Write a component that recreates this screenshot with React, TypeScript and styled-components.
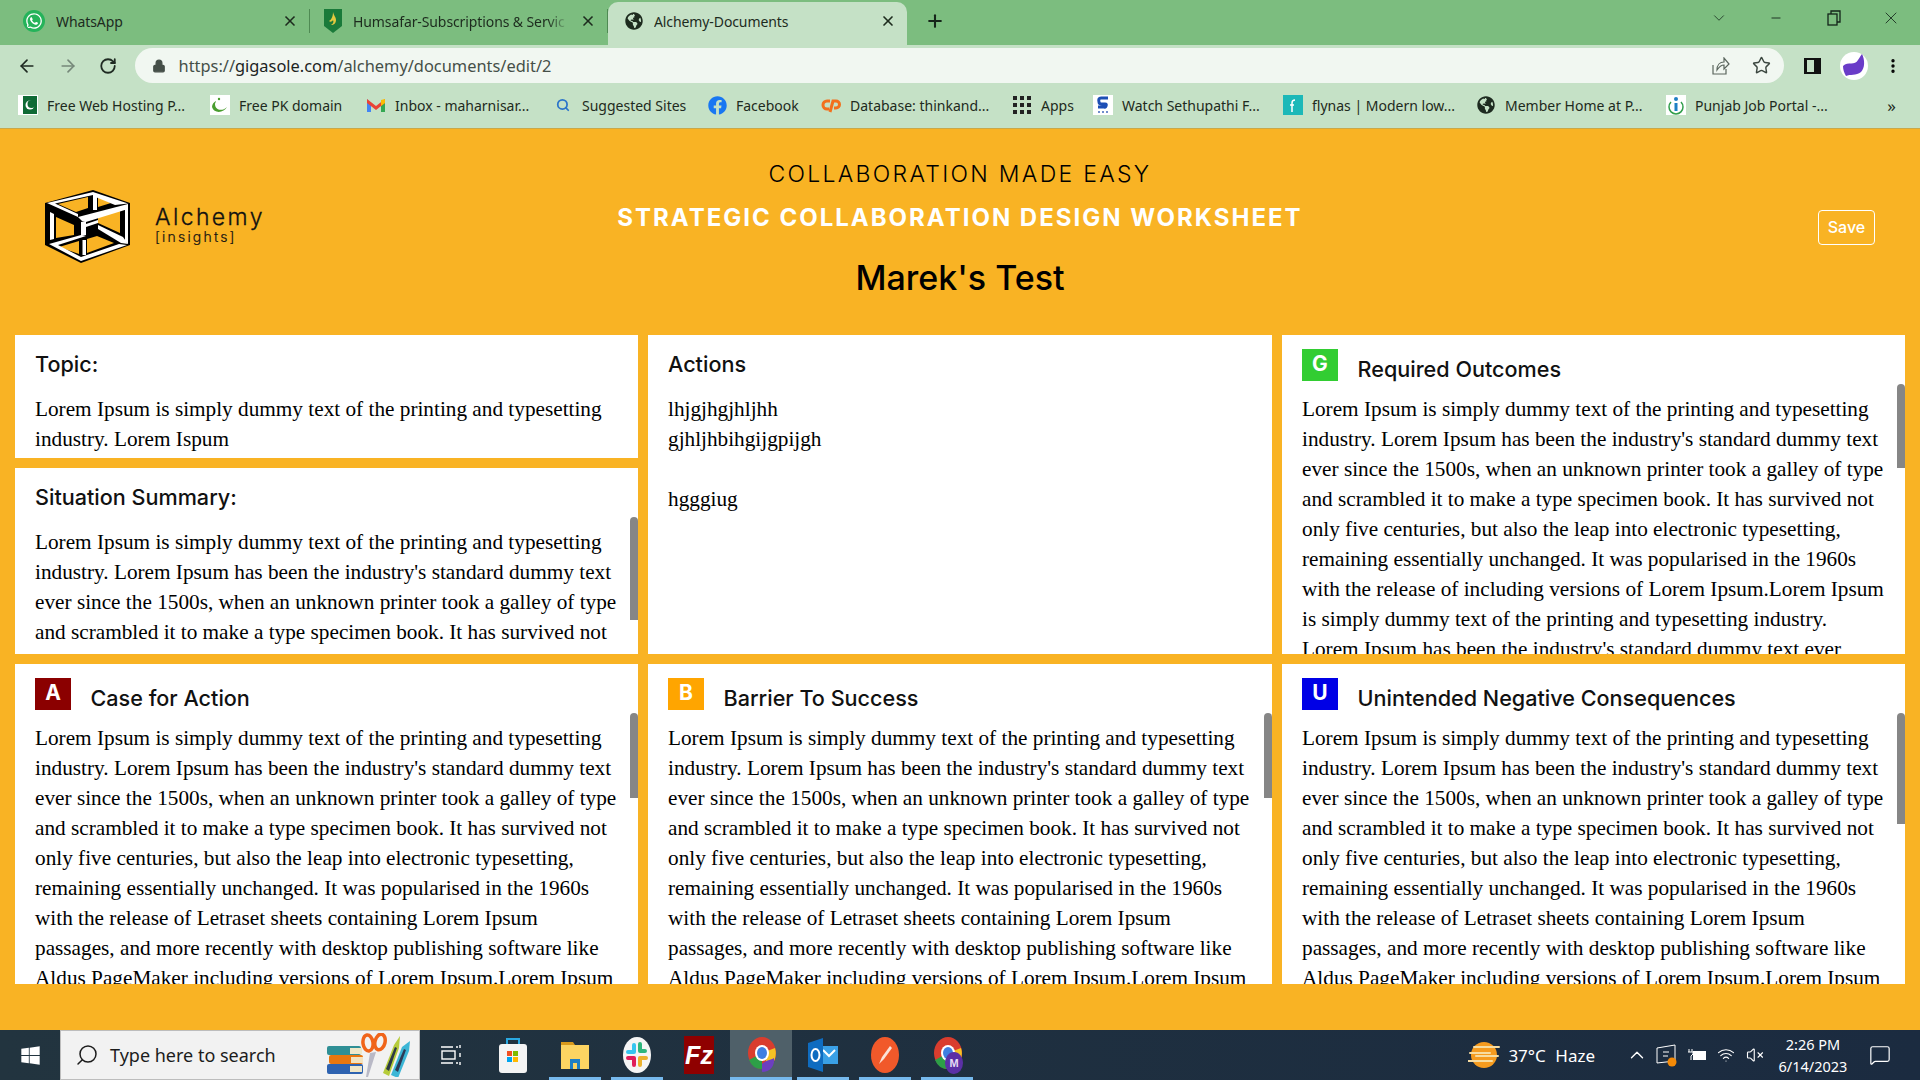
import React from "react";
import styled, { createGlobalStyle } from "styled-components";
import { FaWhatsapp, FaFacebook, FaGlobeAmericas, FaWindows } from "react-icons/fa";
import { ArrowLeft, ArrowRight, RotateCw, Lock, Plus, X, ChevronDown, ChevronUp, Search, Minus, MoreVertical, Star, Wifi, VolumeX, MessageSquare } from "lucide-react";

const GlobalStyle = createGlobalStyle`
  html, body { margin: 0; padding: 0; height: 100%; overflow: hidden; }
  #root { height: 100%; }
  * { box-sizing: border-box; }
`;

const Screen = styled.div`
  width: 1920px;
  height: 1080px;
  display: flex;
  flex-direction: column;
  background: #f9b324;
  overflow: hidden;
`;

/* browser chrome */
const TabBar = styled.div`
  height: 45px;
  background: #7cbd7f;
  display: flex;
  align-items: flex-end;
`;

const Tab = styled.div<{ $w: number; $pad: number; $active?: boolean }>`
  width: ${(p) => p.$w}px;
  padding: 0 11px 0 ${(p) => p.$pad}px;
  display: flex;
  align-items: center;
  gap: 11px;
  font: 14px "Noto Sans", sans-serif;
  letter-spacing: -0.1px;
  color: #1d2b1e;
  white-space: nowrap;
  ${(p) =>
    p.$active
      ? `height: 43px; padding-bottom: 5px; border-radius: 10px 10px 0 0; background: #c5e1c6;`
      : `height: 24px; margin-bottom: 12px; border-right: 1px solid #4f8a53;`}
`;

const TabTitle = styled.span<{ $fade?: boolean }>`
  flex: 1;
  overflow: hidden;
  white-space: nowrap;
  ${(p) => p.$fade && `mask-image: linear-gradient(90deg, #000 90%, transparent);`}
`;

const WhatsappMark = styled(FaWhatsapp)`
  flex: none;
  background: #25b35a;
  border-radius: 50%;
  color: #fff;
  padding: 2px;
`;

const NewTab = styled.div`
  width: 56px;
  height: 43px;
  display: flex;
  align-items: center;
  justify-content: center;
  padding-bottom: 5px;
  color: #16261a;
`;

const WindowControls = styled.div`
  margin-left: auto;
  height: 45px;
  display: flex;
  align-items: flex-start;
  padding-top: 8px;
  color: #13241a;
`;

const WinButton = styled.div`
  width: 57.5px;
  height: 20px;
  display: flex;
  align-items: center;
  justify-content: center;
`;

const Toolbar = styled.div`
  height: 41px;
  background: #c5e1c6;
  display: flex;
  align-items: center;
  padding: 0 0 0 7px;
`;

const NavButton = styled.div<{ $dim?: boolean }>`
  width: 40.5px;
  display: flex;
  justify-content: center;
  color: ${(p) => (p.$dim ? "#76887a" : "#1f2a22")};
`;

const Omnibox = styled.div`
  width: 1649px;
  margin-left: 6px;
  height: 35px;
  border-radius: 18px;
  background: #f1f7f1;
  display: flex;
  align-items: center;
  padding: 0 0 0 17px;
  color: #454f48;
  font: 16.4px "Noto Sans", sans-serif;
  gap: 13px;
`;

const OmniIcons = styled.div`
  margin-left: auto;
  display: flex;
  align-items: center;
  gap: 22px;
  padding-right: 13px;
  color: #3c4740;
`;

const ToolIcons = styled.div`
  display: flex;
  align-items: center;
  padding-left: 20px;
`;

const AvatarSlot = styled.span`
  display: flex;
  margin: 0 16px 0 18px;
`;

const Dark = styled.span`
  color: #1c241e;
`;

const Bookmarks = styled.div`
  height: 43px;
  background: #c5e1c6;
  border-bottom: 1px solid #c9a84a;
  display: flex;
  align-items: center;
  padding: 0 0 4px 18px;
  font: 14px "Noto Sans", sans-serif;
  color: #1e2a20;
`;

const Bookmark = styled.div<{ $w: number }>`
  width: ${(p) => p.$w}px;
  display: flex;
  align-items: center;
  gap: 9px;
  white-space: nowrap;
`;

const Fav = styled.span`
  width: 20px;
  height: 20px;
  flex: none;
  display: flex;
  align-items: center;
  justify-content: center;
  color: #1e2a20;
`;

const More = styled.div`
  margin-left: auto;
  padding-right: 24px;
  font-size: 17px;
`;

/* page */
const Header = styled.header`
  height: 206px;
  display: grid;
  grid-template-columns: 1fr auto 1fr;
  padding: 0 45px;
`;

const Logo = styled.div`
  display: flex;
  align-items: flex-start;
  gap: 25px;
  padding-top: 61px;
`;

const LogoText = styled.div`
  display: flex;
  flex-direction: column;
  font-family: "Inter", sans-serif;
  color: #111;
  padding-top: 14px;
`;

const LogoName = styled.span`
  font-size: 23px;
  font-weight: 300;
  line-height: 26px;
  letter-spacing: 2.4px;
  -webkit-text-stroke: 0.3px #111;
`;

const LogoSub = styled.span`
  font-size: 14px;
  font-weight: 300;
  line-height: 13px;
  letter-spacing: 2.2px;
  -webkit-text-stroke: 0.2px #111;
`;

const Titles = styled.div`
  display: flex;
  flex-direction: column;
  align-items: center;
  padding-top: 31px;
  font-family: "Inter", sans-serif;
`;

const Tagline = styled.div`
  font-size: 23px;
  font-weight: 300;
  line-height: 28px;
  letter-spacing: 2.3px;
  color: #000;
`;

const Worksheet = styled.div`
  margin-top: 15px;
  font-size: 24px;
  font-weight: 700;
  line-height: 29px;
  letter-spacing: 2px;
  color: #fff;
`;

const DocName = styled.h1`
  margin: 24px 0 0;
  font-size: 34px;
  font-weight: 500;
  line-height: 44px;
  color: #000;
`;

const SaveRow = styled.div`
  display: flex;
  justify-content: flex-end;
  align-items: flex-start;
  padding-top: 81px;
`;

const SaveButton = styled.button`
  width: 57px;
  height: 35px;
  border: 1px solid #fff;
  border-radius: 4px;
  background: transparent;
  color: #fff;
  font: 500 16px "Inter", sans-serif;
  padding: 0 0 2px;
`;

const Board = styled.main`
  display: grid;
  grid-template-columns: 623px 624px 623px;
  grid-template-rows: 319px 320px;
  column-gap: 10px;
  row-gap: 10px;
  padding: 0 15px;
`;

const Stack = styled.div`
  display: flex;
  flex-direction: column;
  gap: 10px;
  min-height: 0;
`;

const Card = styled.section<{ $h?: number }>`
  position: relative;
  background: #fff;
  padding: 14px 20px 0;
  overflow: hidden;
  ${(p) => (p.$h ? `height: ${p.$h}px; flex: none;` : "")}
`;

const CardHead = styled.div`
  height: 32px;
  margin-bottom: 13px;
  display: flex;
  align-items: flex-start;
  gap: 19.5px;
`;

const Badge = styled.span<{ $bg: string }>`
  width: 36px;
  height: 32px;
  background: ${(p) => p.$bg};
  color: #fff;
  font: 700 21px/30px "Inter", sans-serif;
  text-align: center;
`;

const CardTitle = styled.h2<{ $badged?: boolean }>`
  margin: ${(p) => (p.$badged ? "8px" : "3px")} 0 0;
  font: 500 21.6px/24px "Inter", sans-serif;
  color: #111;
`;

const Body = styled.div`
  font: 21.25px/30px "Liberation Serif", serif;
  color: #000;
  white-space: pre-line;
`;

const Thumb = styled.div<{ $top: number; $h: number }>`
  position: absolute;
  right: 0;
  top: ${(p) => p.$top}px;
  width: 8px;
  height: ${(p) => p.$h}px;
  background: #868686;
  border-radius: 4px 4px 0 0;
`;

/* taskbar */
const Taskbar = styled.footer`
  margin-top: auto;
  height: 50px;
  background: linear-gradient(90deg, #22343f, #1b2b40);
  display: flex;
  align-items: stretch;
  color: #fff;
`;

const StartButton = styled.div`
  width: 60px;
  display: flex;
  align-items: center;
  justify-content: center;
  font-size: 21px;
`;

const SearchBox = styled.div`
  width: 360px;
  background: #f2f2f2;
  border: 1px solid #bdbdbd;
  display: flex;
  align-items: center;
  padding-left: 14px;
  gap: 11px;
  color: #1c1c1c;
  font: 18px "Noto Sans", sans-serif;
`;

const SearchGlass = styled(Search)`
  transform: scaleX(-1);
`;

const Doodle = styled.span`
  margin-left: auto;
  margin-right: 9px;
  display: flex;
`;

const TaskView = styled.div`
  width: 62px;
  display: flex;
  align-items: center;
  justify-content: center;
`;

const Slot = styled.div<{ $open?: boolean; $active?: boolean }>`
  position: relative;
  width: 62px;
  display: flex;
  align-items: center;
  justify-content: center;
  background: ${(p) => (p.$active ? "#4f6069" : "transparent")};
  ${(p) =>
    p.$open &&
    `&::after {
      content: "";
      position: absolute;
      bottom: 0;
      height: 3px;
      left: ${p.$active ? 0 : 5}px;
      right: ${p.$active ? 0 : 5}px;
      background: #76b9ed;
    }`}
`;

const FzTile = styled.span`
  width: 30px;
  height: 38px;
  display: flex;
  align-items: center;
  justify-content: center;
  background: #8f0000;
  color: #fff;
  font: italic bold 25px "Liberation Sans", sans-serif;
`;

const Tray = styled.div`
  margin-left: auto;
  display: flex;
  align-items: center;
  padding-right: 17px;
  font: 17px "Noto Sans", sans-serif;
`;

const Weather = styled.div`
  display: flex;
  align-items: center;
  gap: 8px;
  margin-right: 28px;
  white-space: nowrap;
  word-spacing: 5px;
`;

const TrayIcon = styled.div<{ $w: number }>`
  width: ${(p) => p.$w}px;
  display: flex;
  justify-content: center;
`;

const Clock = styled.div`
  width: 88px;
  text-align: center;
  font-size: 14.5px;
  line-height: 22px;
`;

const Notify = styled.div`
  width: 46px;
  display: flex;
  justify-content: center;
`;

const CubeLogo = () => (
  <svg width="85" height="73" viewBox="0 0 85 73">
    <polygon points="48,0 85,13 85,55 36,73 0,55 0,13" fill="#000" />
    <g fill="#f9b324">
      <polygon points="13,14 43,7 43,18 31,22" />
      <polygon points="53,7 66,13 53,17" />
      <polygon points="11,27 29,35 29,45 11,48" />
      <polygon points="53,25 75,19 75,43 53,33" />
      <polygon points="14,57 34,51 34,64" />
      <polygon points="42,49 52,46 69,53 42,63" />
    </g>
    <g fill="#fff">
      <polygon points="2,13 48,2 48,5 10,13.5 33,24 33,27" />
      <polygon points="48,2 83,13.5 70,15 48,6" />
      <polygon points="83,14 83,19 41,32 37,31 33,27" />
      <rect x="48" y="6" width="4" height="14" />
      <polygon points="80,18 83,17 83,54 80,51" />
      <polygon points="5,22 9,24 9,49 5,50" />
      <polygon points="36,32 41,31 41,34 53,30 53,33 41,37 41,45 36,46" />
      <polygon points="53,35 78,47 83,54 76,53 53,39" />
      <polygon points="4,54 36,45 41,46 13,55 36,67 74,54 82,55 36,71" />
      <rect x="37.5" y="50" width="3.5" height="15" />
    </g>
  </svg>
);

const BooksDoodle = () => (
  <svg width="84" height="44" viewBox="0 0 84 44">
    <rect x="1" y="13" width="34" height="9" rx="2" fill="#2f8f95" />
    <rect x="24" y="15" width="12" height="6" fill="#eee8c9" />
    <rect x="3" y="22" width="34" height="9" rx="2" fill="#e8770f" />
    <rect x="25" y="24" width="12" height="6" fill="#f3e3bf" />
    <rect x="1" y="31" width="36" height="10" rx="2" fill="#2d62b0" />
    <rect x="24" y="33" width="12" height="6" fill="#efe6c8" />
    <g fill="none" stroke="#f0641a" strokeWidth="3.5">
      <ellipse cx="42" cy="10" rx="5" ry="8" transform="rotate(-8 42 10)" />
      <ellipse cx="54" cy="9" rx="5" ry="8" transform="rotate(14 54 9)" />
    </g>
    <polygon points="44,20 50,19 42,44 40,44" fill="#b9b9c6" />
    <polygon points="57,40 68,12 74,3 73,15 63,43" fill="#b6cc3a" />
    <polygon points="60,36 69,14 71,15 63,38" fill="#2d3a45" />
    <polygon points="65,42 76,14 84,8 83,18 72,45" fill="#3cb6d6" />
    <polygon points="69,37 78,16 80,17 72,39" fill="#2d3a55" />
  </svg>
);

const ShieldIcon = () => (
  <svg width="18" height="24" viewBox="0 0 18 24">
    <path d="M0 0h18v17l-9 7-9-7z" fill="#1a7a3a" />
    <path d="M9 3c1 4 3 5 3 8s-2 5-5 5c2-1 3-3 2-5-1 2-3 2-4 1 2-1 4-4 4-9z" fill="#e3c93f" />
  </svg>
);

const FlagFav = () => (
  <svg width="20" height="20" viewBox="0 0 20 20">
    <rect width="20" height="20" fill="#fff" />
    <rect x="5" y="1" width="14" height="18" fill="#0f6a35" />
    <circle cx="12" cy="10" r="4.5" fill="#fff" />
    <circle cx="13.5" cy="9" r="4" fill="#0f6a35" />
  </svg>
);

const CrescentFav = () => (
  <svg width="20" height="20" viewBox="0 0 20 20">
    <rect width="20" height="20" fill="#fff" />
    <path d="M5 9c0 6 7 8 12 3-3 6-13 7-15 0 0-3 2-5 4-6 0 1-1 2-1 3z" fill="#4a9d2f" />
    <circle cx="9" cy="4" r="1.2" fill="#4a9d2f" />
  </svg>
);

const GmailFav = () => (
  <svg width="20" height="20" viewBox="0 0 20 20">
    <path d="M1 4v13h4V9z" fill="#4285f4" />
    <path d="M19 4v13h-4V9z" fill="#34a853" />
    <path d="M1 4l9 7 9-7v4l-9 7-9-7z" fill="#ea4335" />
    <path d="M15 5l4-1v4l-4 3z" fill="#fbbc04" />
  </svg>
);

const CpanelFav = () => (
  <svg width="20" height="20" viewBox="0 0 20 20" fill="none" stroke="#f2701d" strokeWidth="3">
    <path d="M9 6H6a4 4 0 0 0 0 8h2" />
    <path d="M9 17l3-11h3a3.500 3.500 0 0 1 0 7h-2" />
  </svg>
);

const SFav = () => (
  <svg width="20" height="20" viewBox="0 0 20 20">
    <rect width="20" height="20" fill="#fff" />
    <path d="M15 3H8Q5 3 6 7q0 2 3 2h3q2 0 1 2t-2 1H5" fill="none" stroke="#1d4fb5" strokeWidth="3" />
    <path d="M5 17h2M9 17h2M13 17h2" stroke="#6f8ccc" strokeWidth="2" />
  </svg>
);

const FlynasFav = () => (
  <svg width="20" height="20" viewBox="0 0 20 20">
    <rect width="20" height="20" fill="#1cb8b8" />
    <path d="M9 17V8q0-3 3-3M7 10h4" stroke="#fff" fill="none" strokeWidth="1.5" />
  </svg>
);

const PortalFav = () => (
  <svg width="20" height="20" viewBox="0 0 20 20">
    <rect width="20" height="20" fill="#fff" />
    <circle cx="10" cy="4" r="2" fill="#1f7fc4" />
    <rect x="8.500" y="8" width="3" height="8" fill="#1f7fc4" />
    <path d="M5 7a7 7 0 1 0 10 0" fill="none" stroke="#2f9d4a" strokeWidth="1.5" />
  </svg>
);

const StoreIcon = () => (
  <svg width="30" height="38" viewBox="0 0 30 38">
    <path d="M9 8V3h12v5" fill="none" stroke="#29a8e0" strokeWidth="2" />
    <rect x="1" y="8" width="28" height="29" rx="3" fill="#f4f4f4" />
    <rect x="9" y="15" width="5" height="5" fill="#f25022" />
    <rect x="15" y="15" width="5" height="5" fill="#7fba00" />
    <rect x="9" y="21" width="5" height="5" fill="#00a4ef" />
    <rect x="15" y="21" width="5" height="5" fill="#ffb900" />
  </svg>
);

const FolderIcon = () => (
  <svg width="28" height="30" viewBox="0 0 28 30">
    <path d="M0 2h12l2 3h-14z" fill="#d99a1c" />
    <rect y="5" width="28" height="24" fill="#fcd462" />
    <path d="M9 29v-10h10v10h-3v-6h-4v6z" fill="#1f7fc4" />
  </svg>
);

const SlackIcon = () => (
  <svg width="30" height="36" viewBox="0 0 30 36">
    <ellipse cx="15" cy="18" rx="14" ry="18" fill="#f5f5f5" />
    <g strokeWidth="4" strokeLinecap="round">
      <path d="M12 8v7M6 15h5" stroke="#36c5f0" />
      <path d="M23 14h-5M18 7v7" stroke="#2eb67d" />
      <path d="M18 28v-7M24 21h-6" stroke="#ecb22e" />
      <path d="M6 21h6M12 21v7" stroke="#e01e5a" />
    </g>
  </svg>
);

const ChromeIcon = ({ badge }: { badge?: string }) => (
  <svg width="32" height="38" viewBox="-2 0 32 38">
    <ellipse cx="15" cy="17" rx="14" ry="16" fill="#d93d2e" />
    <path d="M15 17L2 24a14 16 0 0 0 13 9z" fill="#2d9f47" />
    <path d="M15 17l13-5a14 16 0 0 1-6 19z" fill="#f6c324" />
    <ellipse cx="15" cy="17" rx="7" ry="8" fill="#fff" />
    <ellipse cx="15" cy="17" rx="5" ry="6" fill="#3f7fe0" />
    {badge ? (
      <>
        <ellipse cx="21" cy="27" rx="9" ry="11" fill="#5b30a6" />
        <text x="21" y="31" fontSize="11" fontFamily="Liberation Sans" fill="#e5dcf5" textAnchor="middle" fontWeight="bold">
          {badge}
        </text>
      </>
    ) : (
      <path d="M15 36c8 0 13-6 12-14-3 2-8 2-12 6z" fill="#6d3fc0" />
    )}
  </svg>
);

const OutlookIcon = () => (
  <svg width="30" height="34" viewBox="0 0 30 34">
    <rect x="11" y="8" width="19" height="18" fill="#3aa0e6" />
    <path d="M15 12l6 6 6-6" fill="none" stroke="#fff" strokeWidth="2" />
    <polygon points="0,5 15,0 15,34 0,29" fill="#0f6cc0" />
    <ellipse cx="7.500" cy="17" rx="4" ry="6" fill="none" stroke="#fff" strokeWidth="2" />
  </svg>
);

const PenIcon = () => (
  <svg width="28" height="36" viewBox="0 0 28 36">
    <ellipse cx="14" cy="18" rx="14" ry="18" fill="#f1592a" />
    <path d="M8 27l3-7 8-11 2 2-8 11z" fill="#fbe3d8" />
  </svg>
);

const TaskViewIcon = () => (
  <svg width="20" height="22" viewBox="0 0 20 22" fill="none" stroke="#fff" strokeWidth="1.4">
    <path d="M0 3h12M0 19h12M15 3h2M15 19h2M19 1v3M19 9v4M19 18v3" />
    <rect x="1" y="7" width="13" height="8" />
  </svg>
);

const SunHaze = () => (
  <svg width="32" height="28" viewBox="0 0 32 28">
    <circle cx="16" cy="14" r="13" fill="#f59b1f" />
    <path d="M6 6h25M2 12h20M8 15h22M0 20h24" stroke="#f7dca0" strokeWidth="2" strokeLinecap="round" />
  </svg>
);

const ShareIcon = () => (
  <svg width="18" height="18" viewBox="0 0 18 18" fill="none" stroke="#5a655d" strokeWidth="1.2">
    <path d="M1 8v9h13v-5" />
    <path d="M5 13c0-5 3-8 7-8V1l5 6-5 5V8c-3 0-5 2-7 5z" />
  </svg>
);

const SidePanel = () => (
  <svg width="18" height="18" viewBox="0 0 18 18">
    <rect x="0" y="1" width="17" height="16" fill="#111" />
    <rect x="3" y="3" width="7" height="12" fill="#c5e1c6" />
  </svg>
);

const Avatar = () => (
  <svg width="28" height="28" viewBox="0 0 28 28">
    <circle cx="14" cy="14" r="14" fill="#fff" />
    <path d="M3 14c5-5 12 0 15-6 2-3 3-5 4-6 3 6 3 14-1 18-5 4-11 2-15 4-2-3-3-7-3-10z" fill="#6a3cc8" />
  </svg>
);

const AppsGrid = () => (
  <svg width="18" height="18" viewBox="0 0 18 18" fill="#222">
    {[0, 7, 14].map((y) => [0, 7, 14].map((x) => <rect key={`${x}${y}`} x={x} y={y} width="4" height="4" />))}
  </svg>
);

const RestoreIcon = () => (
  <svg width="14" height="16" viewBox="0 0 14 16" fill="none" stroke="#13241a" strokeWidth="1.3">
    <rect x="1" y="4" width="9" height="11" />
    <path d="M4 4V1h9v11h-3" />
  </svg>
);

const BatteryIcon = () => (
  <svg width="21" height="14" viewBox="0 0 21 14">
    <path d="M3 1v3M6 1v3M2 4h5v2l-2 2v4" stroke="#fff" fill="none" />
    <rect x="7" y="3" width="13" height="9" fill="#fff" />
  </svg>
);

const MeetIcon = () => (
  <svg width="21" height="24" viewBox="0 0 21 24" fill="none" stroke="#fff">
    <path d="M1 5l18-3v16l-18 2z" />
    <path d="M7 9h6M7 13h5" />
    <circle cx="16" cy="19" r="4.500" fill="#f58a07" stroke="none" />
  </svg>
);

const LOREM_START = "Lorem Ipsum is simply dummy text of the printing and typesetting industry. ";
const LOREM_HISTORY =
  "Lorem Ipsum has been the industry's standard dummy text ever since the 1500s, when an unknown printer took a galley of type and scrambled it to make a type specimen book. It has survived not only five centuries, but also the leap into electronic typesetting, remaining essentially unchanged. It was popularised in the 1960s with the release of ";
const LOREM_LONG =
  LOREM_START +
  LOREM_HISTORY +
  "Letraset sheets containing Lorem Ipsum passages, and more recently with desktop publishing software like Aldus PageMaker including versions of Lorem Ipsum.Lorem Ipsum";
const LOREM_OUTCOMES =
  LOREM_START +
  LOREM_HISTORY +
  "including versions of Lorem Ipsum.Lorem Ipsum is simply dummy text of the printing and typesetting industry. Lorem Ipsum has been the industry's standard dummy text ever";

const bookmarks = [
  { w: 192, label: "Free Web Hosting P...", icon: <FlagFav /> },
  { w: 156, label: "Free PK domain", icon: <CrescentFav /> },
  { w: 187, label: "Inbox - maharnisar...", icon: <GmailFav /> },
  { w: 154, label: "Suggested Sites", icon: <Search size={14} strokeWidth={3} color="#2b74c9" /> },
  { w: 114, label: "Facebook", icon: <FaFacebook size={19} color="#1877f2" /> },
  { w: 191, label: "Database: thinkand...", icon: <CpanelFav /> },
  { w: 81, label: "Apps", icon: <AppsGrid /> },
  { w: 190, label: "Watch Sethupathi F...", icon: <SFav /> },
  { w: 193, label: "flynas | Modern low...", icon: <FlynasFav /> },
  { w: 190, label: "Member Home at P...", icon: <FaGlobeAmericas size={18} /> },
  { w: 200, label: "Punjab Job Portal -...", icon: <PortalFav /> },
];

export default function App() {
  return (
    <Screen>
      <GlobalStyle />
      <TabBar>
        <Tab $w={310} $pad={23}>
          <WhatsappMark size={22} />
          <TabTitle>WhatsApp</TabTitle>
          <X size={16} strokeWidth={2.5} />
        </Tab>
        <Tab $w={298} $pad={14}>
          <ShieldIcon />
          <TabTitle $fade>Humsafar-Subscriptions &amp; Servic</TabTitle>
          <X size={16} strokeWidth={2.5} />
        </Tab>
        <Tab $w={299} $pad={17} $active>
          <FaGlobeAmericas size={18} />
          <TabTitle>Alchemy-Documents</TabTitle>
          <X size={16} strokeWidth={2.5} />
        </Tab>
        <NewTab>
          <Plus size={20} strokeWidth={2.5} />
        </NewTab>
        <WindowControls>
          <WinButton>
            <ChevronDown size={18} strokeWidth={1} />
          </WinButton>
          <WinButton>
            <Minus size={14} strokeWidth={1.5} />
          </WinButton>
          <WinButton>
            <RestoreIcon />
          </WinButton>
          <WinButton>
            <X size={20} strokeWidth={1} />
          </WinButton>
        </WindowControls>
      </TabBar>
      <Toolbar>
        <NavButton>
          <ArrowLeft size={20} />
        </NavButton>
        <NavButton $dim>
          <ArrowRight size={20} />
        </NavButton>
        <NavButton>
          <RotateCw size={18} strokeWidth={2.4} />
        </NavButton>
        <Omnibox>
          <Lock size={14} fill="#454f48" />
          <span>
            https://<Dark>gigasole.com</Dark>/alchemy/documents/edit/2
          </span>
          <OmniIcons>
            <ShareIcon />
            <Star size={19} strokeWidth={1.8} />
          </OmniIcons>
        </Omnibox>
        <ToolIcons>
          <SidePanel />
          <AvatarSlot>
            <Avatar />
          </AvatarSlot>
          <MoreVertical size={18} strokeWidth={2.5} />
        </ToolIcons>
      </Toolbar>
      <Bookmarks>
        {bookmarks.map((b) => (
          <Bookmark key={b.label} $w={b.w}>
            <Fav>{b.icon}</Fav>
            {b.label}
          </Bookmark>
        ))}
        <More>»</More>
      </Bookmarks>

      <Header>
        <Logo>
          <CubeLogo />
          <LogoText>
            <LogoName>Alchemy</LogoName>
            <LogoSub>[insights]</LogoSub>
          </LogoText>
        </Logo>
        <Titles>
          <Tagline>COLLABORATION MADE EASY</Tagline>
          <Worksheet>STRATEGIC COLLABORATION DESIGN WORKSHEET</Worksheet>
          <DocName>Marek's Test</DocName>
        </Titles>
        <SaveRow>
          <SaveButton>Save</SaveButton>
        </SaveRow>
      </Header>

      <Board>
        <Stack>
          <Card $h={123}>
            <CardHead>
              <CardTitle>Topic:</CardTitle>
            </CardHead>
            <Body>Lorem Ipsum is simply dummy text of the printing and typesetting industry. Lorem Ispum</Body>
          </Card>
          <Card $h={186}>
            <CardHead>
              <CardTitle>Situation Summary:</CardTitle>
            </CardHead>
            <Body>{LOREM_LONG}</Body>
            <Thumb $top={49} $h={103} />
          </Card>
        </Stack>
        <Card>
          <CardHead>
            <CardTitle>Actions</CardTitle>
          </CardHead>
          <Body>{"lhjgjhgjhljhh\ngjhljhbihgijgpijgh\n\nhgggiug"}</Body>
        </Card>
        <Card>
          <CardHead>
            <Badge $bg="#32cd32">G</Badge>
            <CardTitle $badged>Required Outcomes</CardTitle>
          </CardHead>
          <Body>{LOREM_OUTCOMES}</Body>
          <Thumb $top={49} $h={84} />
        </Card>
        <Card>
          <CardHead>
            <Badge $bg="#8b0000">A</Badge>
            <CardTitle $badged>Case for Action</CardTitle>
          </CardHead>
          <Body>{LOREM_LONG}</Body>
          <Thumb $top={49} $h={85} />
        </Card>
        <Card>
          <CardHead>
            <Badge $bg="#ffa500">B</Badge>
            <CardTitle $badged>Barrier To Success</CardTitle>
          </CardHead>
          <Body>{LOREM_LONG}</Body>
          <Thumb $top={49} $h={85} />
        </Card>
        <Card>
          <CardHead>
            <Badge $bg="#0000e6">U</Badge>
            <CardTitle $badged>Unintended Negative Consequences</CardTitle>
          </CardHead>
          <Body>{LOREM_LONG}</Body>
          <Thumb $top={49} $h={111} />
        </Card>
      </Board>

      <Taskbar>
        <StartButton>
          <FaWindows />
        </StartButton>
        <SearchBox>
          <SearchGlass size={24} strokeWidth={1.5} />
          Type here to search
          <Doodle>
            <BooksDoodle />
          </Doodle>
        </SearchBox>
        <TaskView>
          <TaskViewIcon />
        </TaskView>
        <Slot>
          <StoreIcon />
        </Slot>
        <Slot $open>
          <FolderIcon />
        </Slot>
        <Slot $open>
          <SlackIcon />
        </Slot>
        <Slot>
          <FzTile>Fz</FzTile>
        </Slot>
        <Slot $open $active>
          <ChromeIcon />
        </Slot>
        <Slot $open>
          <OutlookIcon />
        </Slot>
        <Slot $open>
          <PenIcon />
        </Slot>
        <Slot $open>
          <ChromeIcon badge="M" />
        </Slot>
        <Tray>
          <Weather>
            <SunHaze />
            <span>37°C Haze</span>
          </Weather>
          <TrayIcon $w={28}>
            <ChevronUp size={22} strokeWidth={1.5} />
          </TrayIcon>
          <TrayIcon $w={30}>
            <MeetIcon />
          </TrayIcon>
          <TrayIcon $w={30}>
            <BatteryIcon />
          </TrayIcon>
          <TrayIcon $w={30}>
            <Wifi size={18} strokeWidth={1.5} />
          </TrayIcon>
          <TrayIcon $w={28}>
            <VolumeX size={18} strokeWidth={1.5} />
          </TrayIcon>
          <Clock>
            2:26 PM
            <br />
            6/14/2023
          </Clock>
          <Notify>
            <MessageSquare size={22} strokeWidth={1.3} />
          </Notify>
        </Tray>
      </Taskbar>
    </Screen>
  );
}
